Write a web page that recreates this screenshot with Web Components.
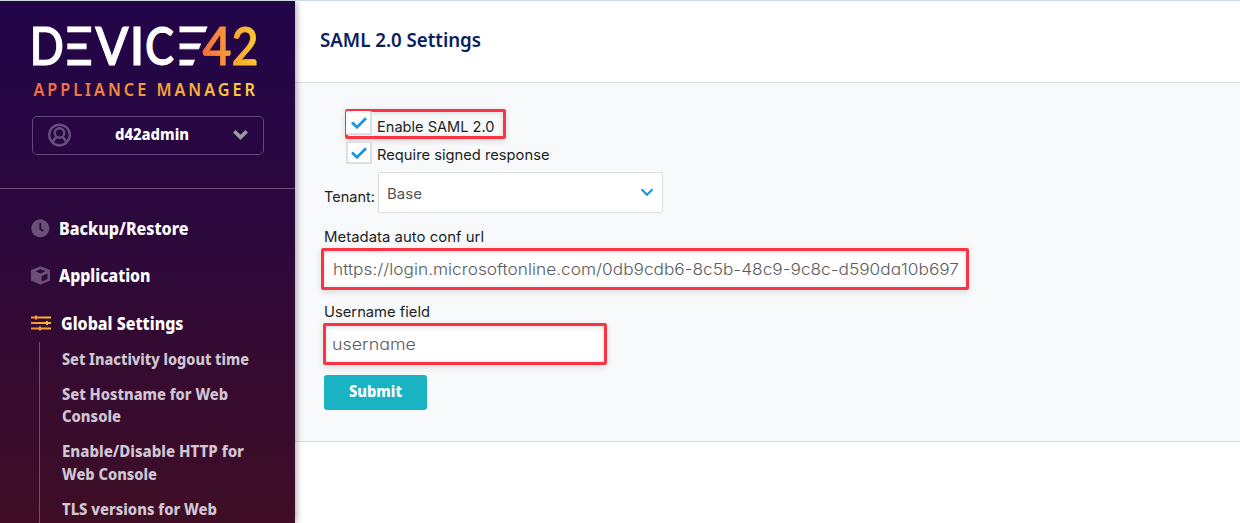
<!DOCTYPE html>
<html lang="en"><head><meta charset="utf-8"><title>SAML 2.0 Settings</title>
<style>
body{margin:0;background:#fff;font-family:Inter,"Liberation Sans",sans-serif;overflow:hidden}
</style></head><body>
<app-shell>
  <side-bar slot="side"></side-bar>
  <saml-page slot="main"></saml-page>
</app-shell>
<script>
const define = (name, html, base = HTMLElement, ready) => customElements.define(name, class extends base {
  constructor(){ super(); this.attachShadow({mode:'open'}).innerHTML = html; }
  connectedCallback(){ if (ready) ready.call(this, this.shadowRoot); }
});

/* One line of text, condensed or widened to the width in its w attribute */
define('fit-text', `<style>
:host{display:inline-block;white-space:nowrap;flex:none}
span{display:inline-block;transform-origin:0 50%}
</style><span><slot></slot></span>`, HTMLElement, function(root){
  const w = parseFloat(this.getAttribute('w')), s = root.querySelector('span');
  s.style.transform = `scaleX(${w / s.getBoundingClientRect().width})`;
  this.style.width = w + 'px';
});

define('app-shell', `<style>
:host{display:grid;grid-template-columns:295px 1fr;height:523px;border-top:1px solid #cdd8df;box-sizing:border-box;overflow:hidden}
.side{position:relative;z-index:1;box-shadow:1px 0 7px rgba(0,0,0,.38);height:522px}
</style><div class="side"><slot name="side"></slot></div><slot name="main"></slot>`);

define('brand-logo', `<style>
:host{display:block;height:114px}
svg{display:block}
text{font-family:Lato,sans-serif;fill:#fff}
.sub{font:600 18px "Noto Sans",sans-serif;fill:url(#g2)}
</style><svg width="295" height="114" viewBox="0 1 295 114">
<defs>
<linearGradient id="g1" gradientUnits="userSpaceOnUse" x1="203" y1="0" x2="257" y2="0"><stop offset="0" stop-color="#f46f3d"/><stop offset="1" stop-color="#fdcb2e"/></linearGradient>
<linearGradient id="g2" gradientUnits="userSpaceOnUse" x1="33" y1="0" x2="255" y2="0"><stop offset="0" stop-color="#f0713f"/><stop offset="1" stop-color="#fbd535"/></linearGradient>
<clipPath id="c1"><rect x="67.3" y="20" width="24" height="50"/></clipPath>
<clipPath id="c2"><path d="M179.5 20H210L191 70H179.5Z"/></clipPath>
</defs>
<g font-size="52" font-weight="600" stroke="#fff" stroke-width=".8">
<text x="29.5" y="64.7" textLength="34.5" lengthAdjust="spacingAndGlyphs">D</text>
<g clip-path="url(#c1)"><text x="51" y="64.7" textLength="43" lengthAdjust="spacingAndGlyphs">E</text></g>
<text x="95.2" y="64.7" textLength="33.3" lengthAdjust="spacingAndGlyphs">V</text>
<text x="129.5" y="64.7" textLength="15" lengthAdjust="spacingAndGlyphs">I</text>
<text x="145" y="64.7" textLength="29" lengthAdjust="spacingAndGlyphs">C</text>
<g clip-path="url(#c2)"><text x="158.5" y="64.7" textLength="54" lengthAdjust="spacingAndGlyphs">E</text></g>
<text x="202.5" y="64.7" textLength="29" lengthAdjust="spacingAndGlyphs" style="fill:url(#g1);stroke:url(#g1)">4</text>
<text x="231.5" y="64.7" textLength="27" lengthAdjust="spacingAndGlyphs" style="fill:url(#g1);stroke:url(#g1)">2</text>
</g>
<text class="sub" transform="translate(33.5 96) scale(.9 1)" textLength="246">APPLIANCE MANAGER</text>
</svg>`);

define('user-menu', `<style>
:host{display:flex;align-items:center;box-sizing:border-box;width:232px;height:39px;margin:1px 0 0 32px;border:1px solid #64477a;border-radius:5px;color:#fff;font:800 16px/24px "Noto Sans",sans-serif;padding:0 15px 2px}
fit-text{margin:-2px 0 0 43px}
.chev{margin-left:auto}
</style><svg width="24" height="24" viewBox="0 0 24 24" fill="none" stroke="#664d7d" stroke-width="2.4"><circle cx="11.5" cy="12" r="10.3"/><circle cx="11.5" cy="10" r="4.8"/><path d="M4.9 19.5c.5-3.2 2.3-4.7 4.2-5.6M18.1 19.5c-.5-3.2-2.3-4.7-4.2-5.6"/></svg>
<fit-text w="74">d42admin</fit-text>
<svg class="chev" width="15" height="10" viewBox="0 0 15 10" fill="none" stroke="#999b9c" stroke-width="3.7"><path d="M1.3 1.3 7.5 7.4l6.2-6.1"/></svg>`);

define('nav-item', `<style>
:host{display:flex;align-items:center;height:26px;margin:0 0 21.3px 31px;color:#fff;font:800 18px/26px "Noto Sans",sans-serif}
.icon{display:flex;width:28px}
:host([open]) .icon{width:30px}
</style><span class="icon"><slot name="icon"></slot></span><slot></slot>`);

define('side-bar', `<style>
:host{display:block;height:522px;overflow:hidden;background:linear-gradient(#220549,#2b083c 43%,#330a32 65%,#3f0e25)}
hr{border:0;border-top:1px solid #6b4e79;margin:33px 0 26px}
ul{list-style:none;margin:-15px 0 0 39px;padding:6px 0 0 22px;border-left:1px solid #69506f;height:220px;color:#d0c6d3;font:800 16px/22.5px "Noto Sans",sans-serif}
li{margin-bottom:12.4px;display:flex;flex-direction:column}
</style><brand-logo></brand-logo><user-menu></user-menu><hr>
<nav-item><svg slot="icon" width="19" height="19" viewBox="0 0 19 19"><circle cx="9.3" cy="9.3" r="9" fill="#6a5078"/><path d="M9.3 4v6l3 2" fill="none" stroke="#2c083b" stroke-width="1.8"/></svg><fit-text w="129.5">Backup/Restore</fit-text></nav-item>
<nav-item><svg slot="icon" width="19" height="19" viewBox="0 0 19 19"><path d="M9.5.3 19 4v10.5L9.5 18.7 0 14.5V4Z" fill="#6a5078"/><path d="M4.5 5.3 9.5 3.2l5 2.1-5 2.1Z M10.7 10l5.8-2.5V13l-5.8 2.5Z" fill="#2e0937"/></svg><fit-text w="91.5">Application</fit-text></nav-item>
<nav-item open><svg slot="icon" width="20" height="16" viewBox="0 0 20 16" fill="none" stroke="url(#o)" stroke-width="2"><defs><linearGradient id="o" gradientUnits="userSpaceOnUse" x1="0" y1="14" x2="20" y2="2"><stop stop-color="#f58235"/><stop offset="1" stop-color="#f7c431"/></linearGradient></defs><path d="M0 2.5h20M0 8h20M0 13.5h20M5 .5v4M16 6v4M9 11.5v4"/></svg><fit-text w="122.5">Global Settings</fit-text></nav-item>
<ul>
<li><fit-text w="187">Set Inactivity logout time</fit-text></li>
<li><fit-text w="166">Set Hostname for Web</fit-text><fit-text w="59">Console</fit-text></li>
<li><fit-text w="182">Enable/Disable HTTP for</fit-text><fit-text w="95">Web Console</fit-text></li>
<li><fit-text w="155">TLS versions for Web</fit-text></li>
</ul>`);

define('check-box', `<style>
:host{display:flex;justify-content:center;align-items:center;box-sizing:border-box;width:26px;height:23px;border:2px solid #dadee5;border-radius:2px;background:#fff;flex:none}
</style><svg width="16" height="12" viewBox="0 0 16 12" fill="none" stroke="#1c94e0" stroke-width="2.7"><path d="M1 5.5 6 10.3 15 1.2"/></svg>`);

define('text-field', `<style>
:host{display:flex;align-items:center;box-sizing:border-box;height:42px;border:3px solid #fb3443;border-radius:2px;background:#fff;box-shadow:0 2px 7px rgba(0,0,0,.12),inset 0 1px 5px rgba(0,0,0,.14);color:#5a5c60;font:300 15.5px/24px Inter,sans-serif;font-feature-settings:"cv11"}
</style><slot></slot>`);

define('select-box', `<style>
:host{display:flex;align-items:center;justify-content:space-between;box-sizing:border-box;width:285px;height:41px;border:1px solid #dadde1;border-radius:2px;background:#fff;padding:0 8px;color:#555}
</style><slot></slot><svg width="14" height="9" viewBox="0 0 14 9" fill="none" stroke="#1c94e0" stroke-width="2.1"><path d="m1.5 1.2 5.5 5.5 5.5-5.5"/></svg>`);

define('saml-page', `<style>
:host{display:block}
header{box-sizing:border-box;height:82px;border-bottom:1px solid #dce0e8;padding:26px 0 0 25px;color:#08215f;font:600 20px/26px "Noto Sans",sans-serif}
main{box-sizing:border-box;height:359px;border-bottom:1px solid #dce0e4;background:#f7f9fb;padding:26px 0 0 29px;color:#1d1f24;font:400 14.5px/18px Inter,sans-serif}
.row{display:flex}
.enable{box-sizing:border-box;width:161.5px;height:30px;margin:0 0 2px 20.5px;border:3px solid #fb3443;border-radius:2px;box-shadow:0 2px 6px rgba(0,0,0,.14),inset 0 1px 5px rgba(0,0,0,.14)}
.enable check-box{margin:-1px 4.5px 0 -1.5px;border-color:#f7f9fb #dadee5 #dadee5 #f7f9fb;height:24px}
.enable fit-text{margin-top:6px}
.require{margin-left:22px;gap:4.5px;height:23px}
.require fit-text{margin-top:5px}
.tenant{margin-top:8px;gap:3px}
.tenant>fit-text{margin-top:16px}
.base{margin-top:2px}
.label{height:18px;margin-top:15px;margin-bottom:2px}
.url{width:648px;margin-left:-3px;padding:2px 0 0 8.5px}
.name{width:284px;margin-left:-1px;padding:2px 0 0 6px}
button{display:flex;justify-content:center;align-items:center;width:103px;height:35px;margin-top:10px;border:0;border-radius:3px;background:#1ab3c3;color:#fff;font:800 16px/24px "Noto Sans",sans-serif;padding:0 0 4px}
</style>
<header><fit-text w="161">SAML 2.0 Settings</fit-text></header>
<main>
<div class="row enable"><check-box></check-box><fit-text w="117.5">Enable SAML 2.0</fit-text></div>
<div class="row require"><check-box></check-box><fit-text w="172.5">Require signed response</fit-text></div>
<div class="row tenant"><fit-text w="51">Tenant:</fit-text><select-box><fit-text class="base" w="35">Base</fit-text></select-box></div>
<div class="row label"><fit-text w="160">Metadata auto conf url</fit-text></div>
<text-field class="url"><fit-text w="626">https://login.microsoftonline.com/0db9cdb6-8c5b-48c9-9c8c-d590da10b697</fit-text></text-field>
<div class="row label" style="margin-top:13px"><fit-text w="106">Username field</fit-text></div>
<text-field class="name"><fit-text w="84">username</fit-text></text-field>
<button><fit-text w="53">Submit</fit-text></button>
</main>`);
</script></body></html>
